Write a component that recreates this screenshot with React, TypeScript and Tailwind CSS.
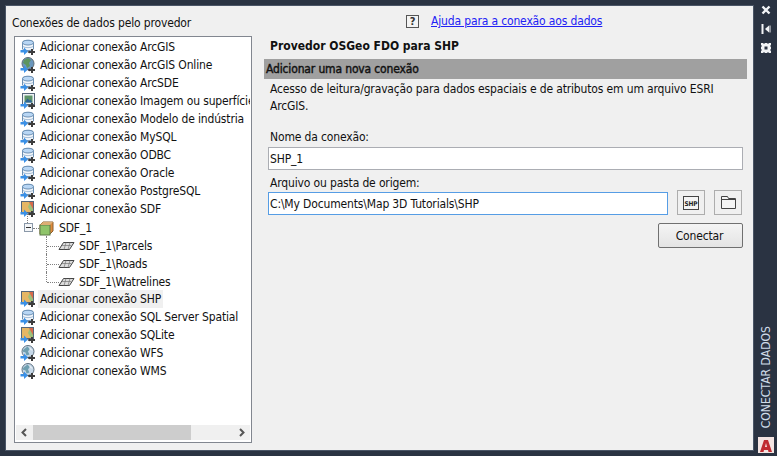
import React from "react";

type Kind = "db" | "globe" | "wms" | "image" | "map";

function Badge() {
  return (
    <>
      <path d="M0.5 11H4V8.5L8 12.5L4 16V13.5H0.5z" fill="#3a90e6" />
      <path d="M12 10v6M9 13h6" stroke="#3d3d3d" strokeWidth="2" />
      <path d="M7.5 13l2-1.5v3z" fill="#3d3d3d" />
    </>
  );
}

function AddIcon({ kind }: { kind: Kind }) {
  return (
    <svg width="16" height="16" viewBox="0 0 16 16" className="shrink-0">
      {kind === "db" && (
        <>
          <path d="M2.5 3.5C2.5 0.8 13.5 0.8 13.5 3.5V10C13.5 12 2.5 12 2.5 10z" fill="#f2f6fb" stroke="#6c90b4" />
          <ellipse cx="8" cy="3.6" rx="5.5" ry="2.4" fill="#b8d6f4" stroke="#6c90b4" />
          <path d="M3 7.5c1.500 1.500 8.500 1.500 10 0" fill="none" stroke="#a8c0d8" />
        </>
      )}
      {kind === "globe" && (
        <>
          <circle cx="8" cy="6.500" r="6" fill="#6b97bd" stroke="#5c6a74" />
          <path d="M4 3l4-2 3 2-2 3 1 3-3 2-1-3-3-2z" fill="#5d955f" />
        </>
      )}
      {kind === "wms" && (
        <>
          <circle cx="8" cy="6.500" r="6" fill="#c6d8e8" stroke="#5f7282" />
          <path d="M3.500 4.500l4-3 2.500 2-2 3 1.500 3-3 1-1-3-3-1z" fill="#6f9fb0" />
          <path d="M9 2.500l3 3" stroke="#fff" />
        </>
      )}
      {kind === "image" && (
        <>
          <rect x="2.500" y="0.500" width="12" height="11" fill="#eef2f6" stroke="#56677a" />
          <rect x="4.500" y="2.500" width="8" height="7" fill="#5c9468" />
          <path d="M4.500 9.500l3-4 2 2 1-1 2 3z" fill="#2e6596" />
        </>
      )}
      {kind === "map" && (
        <>
          <rect x="1.500" y="0.500" width="12" height="11" fill="#9cc07a" stroke="#56677a" />
          <path d="M2 1h8L8 6l3 5H2z" fill="#e6b765" />
          <path d="M9 1h4v7z" fill="#d8694a" />
        </>
      )}
      <Badge />
    </svg>
  );
}

function Row({ kind, text, active }: { kind: Kind; text: string; active?: boolean }) {
  return (
    <div className="flex h-[18px] items-center pl-[4px]">
      <AddIcon kind={kind} />
      <span className={`ml-[2px] whitespace-nowrap px-[2px] leading-[18px] ${active ? "bg-[#f0f0f0]" : ""}`}>{text}</span>
    </div>
  );
}

function LayerRow({ text, last }: { text: string; last?: boolean }) {
  return (
    <div className="relative flex h-[18px] items-center pl-[42px] pt-[2px]">
      <div className={`absolute left-[30px] top-0 border-l border-dotted border-[#808080] ${last ? "h-[10px]" : "h-[18px]"}`} />
      <div className="absolute left-[31px] top-[10px] w-[12px] border-t border-dotted border-[#808080]" />
      <svg width="17" height="10" viewBox="0 0 17 10" className="z-10 shrink-0">
        <path d="M5.500 1.500H16L11.500 8.500H1z" fill="#ddd" stroke="#444" />
        <path d="M4 4.500h9M8 1.500L6 8.500M12 1.500L10 8.500" stroke="#777" strokeWidth="0.7" />
      </svg>
      <span className="ml-[4px] whitespace-nowrap">{text}</span>
    </div>
  );
}

export default function App() {
  return (
    <div className="flex h-[456px] w-[777px] overflow-hidden bg-[#2a3342] text-[12px] tracking-[-0.15px] text-[#111] [font-family:'DejaVu_Sans','Liberation_Sans',sans-serif] [font-stretch:condensed]">
      <div className="ml-[5px] mt-[5px] flex h-[446px] w-[749px] shrink-0 border border-[#4a5566] bg-[#f0f0f0]">
        {/* left column */}
        <div className="flex w-[258px] shrink-0 flex-col pl-[6px] pt-[7px]">
          <div className="h-[23px] leading-[20px]">Conexões de dados pelo provedor</div>
          <div className="ml-[2px] flex h-[407px] w-[238px] flex-col border border-[#828790] bg-white py-[1px] pl-[1px] pr-[1px]">
            <div className="min-h-0 flex-1 overflow-hidden">
              <Row kind="db" text="Adicionar conexão ArcGIS" />
              <Row kind="globe" text="Adicionar conexão ArcGIS Online" />
              <Row kind="db" text="Adicionar conexão ArcSDE" />
              <Row kind="image" text="Adicionar conexão Imagem ou superfície" />
              <Row kind="db" text="Adicionar conexão Modelo de indústria" />
              <Row kind="db" text="Adicionar conexão MySQL" />
              <Row kind="db" text="Adicionar conexão ODBC" />
              <Row kind="db" text="Adicionar conexão Oracle" />
              <Row kind="db" text="Adicionar conexão PostgreSQL" />
              <Row kind="map" text="Adicionar conexão SDF" />
              <div className="relative flex h-[18px] items-center pl-[23px] pt-[2px]">
                <div className="absolute left-[11px] top-[-4px] h-[9px] border-l border-dotted border-[#808080]" />
                <div className="absolute left-[8px] top-[5px] flex h-[9px] w-[9px] items-center justify-center border border-[#8a98a8] bg-[#f4f6f8]">
                  <div className="h-px w-[5px] bg-[#333]" />
                </div>
                <div className="absolute left-[17px] top-[10px] w-[6px] border-t border-dotted border-[#808080]" />
                <svg width="15" height="15" viewBox="0 0 15 15" className="shrink-0">
                  <path d="M1 4l3-3h10v9l-3 3H1z" fill="#e08a3c" stroke="#8a6030" />
                  <rect x="1" y="4" width="10" height="10" fill="#8fc46a" stroke="#5c7a48" />
                  <path d="M1 4l3-3h10l-3 3z" fill="#dcae74" />
                </svg>
                <span className="ml-[5px]">SDF_1</span>
              </div>
              <LayerRow text="SDF_1\Parcels" />
              <LayerRow text="SDF_1\Roads" />
              <LayerRow text="SDF_1\Watrelines" last />
              <Row kind="map" text="Adicionar conexão SHP" active />
              <Row kind="db" text="Adicionar conexão SQL Server Spatial" />
              <Row kind="map" text="Adicionar conexão SQLite" />
              <Row kind="wms" text="Adicionar conexão WFS" />
              <Row kind="wms" text="Adicionar conexão WMS" />
            </div>
            <div className="mb-[1px] flex h-[15px] w-full shrink-0 items-center bg-[#f0f0f0]">
              <svg width="17" height="15" viewBox="0 0 17 15" className="shrink-0">
                <path d="M10 4L6.500 7.500 10 11" fill="none" stroke="#555" strokeWidth="2" />
              </svg>
              <div className="h-[15px] w-[158px] bg-[#cdcdcd]" />
              <div className="flex-1" />
              <svg width="17" height="15" viewBox="0 0 17 15" className="shrink-0">
                <path d="M7 4l3.500 3.500L7 11" fill="none" stroke="#555" strokeWidth="2" />
              </svg>
            </div>
          </div>
        </div>
        {/* right column */}
        <div className="flex min-w-0 flex-1 flex-col pr-[6px]">
          <div className="flex h-[29px] items-center pl-[142px] pt-[1px]">
            <div className="flex h-[13px] w-[13px] items-center justify-center border border-[#555] bg-[#f4f4f4] text-[11px] font-bold leading-none text-[#333]">?</div>
            <a className="ml-[12px] whitespace-nowrap text-[#2222f5] underline">Ajuda para a conexão aos dados</a>
          </div>
          <div className="h-[24px] pl-[6px] pt-[1px] font-bold leading-[20px] tracking-[0]">Provedor OSGeo FDO para SHP</div>
          <div className="h-[20px] bg-[#a0a0a0] pl-[2px] leading-[20px] [-webkit-text-stroke:0.4px_#111]">Adicionar uma nova conexão</div>
          <div className="mt-[2px] pl-[6px] pr-[20px] leading-[17px]">
            Acesso de leitura/gravação para dados espaciais e de atributos em um arquivo ESRI ArcGIS.
          </div>
          <div className="mt-[14px] pl-[6px] leading-[17px]">Nome da conexão:</div>
          <div className="ml-[4px] mt-[1px] flex h-[23px] w-[475px] items-center border border-[#abadb3] bg-white pl-[1px]">SHP_1</div>
          <div className="mt-[5px] pl-[6px] leading-[17px]">Arquivo ou pasta de origem:</div>
          <div className="ml-[4px] -mt-[2px] flex items-end">
            <div className="flex h-[23px] w-[400px] items-center border border-[#569de5] bg-white pl-[1px]">C:\My Documents\Map 3D Tutorials\SHP</div>
            <button className="ml-[9px] flex h-[25px] w-[28px] items-center justify-center border border-[#adadad] bg-[#f0f0f0]">
              <svg width="16" height="14" viewBox="0 0 16 14">
                <rect x="0.500" y="0.500" width="15" height="13" fill="#f4f4f4" stroke="#444" />
                <text x="8" y="10" textAnchor="middle" fontSize="6.500" fontWeight="700" fill="#222" fontFamily="DejaVu Sans, sans-serif">SHP</text>
              </svg>
            </button>
            <button className="ml-[9px] flex h-[25px] w-[28px] items-center justify-center border border-[#adadad] bg-[#f0f0f0]">
              <svg width="15" height="13" viewBox="0 0 15 13">
                <path d="M0.500 12.500V0.500H6.500L7.500 2.500H14.500V12.500ZM0.500 3.500H14.500" fill="#f4f4f4" stroke="#444" />
              </svg>
            </button>
          </div>
          <div className="flex justify-end pr-[4px] pt-[8px]">
            <button className="h-[25px] w-[85px] rounded-[2px] border border-[#707070] bg-gradient-to-b from-[#f4f4f4] to-[#e4e4e4] pr-[2px] text-[#111]">Conectar</button>
          </div>
        </div>
      </div>
      {/* right strip */}
      <div className="flex min-w-0 flex-1 flex-col items-center pt-[4px]">
        <svg width="12" height="12" viewBox="0 0 12 12">
          <path d="M2.500 2.500l7 7M9.500 2.500l-7 7" stroke="#f2f4f6" strokeWidth="2.400" />
        </svg>
        <svg width="12" height="12" viewBox="0 0 12 12" className="mt-[7px]">
          <path d="M2.500 1v10" stroke="#f2f4f6" strokeWidth="2" />
          <path d="M5 6l4-3.500v7z" fill="#f2f4f6" />
          <path d="M10 2.500v7" stroke="#f2f4f6" strokeWidth="1" />
        </svg>
        <svg width="12" height="12" viewBox="0 0 12 12" className="mt-[7px]">
          <path d="M1 1h2.500v1h1V1h3v1h1V1H11v2.500h-1v1h1v3h-1v1h1V11H8.500v-1h-1v1h-3v-1h-1v1H1V8.500h1v-1H1v-3h1v-1H1z" fill="#f2f4f6" />
          <rect x="4.500" y="4.500" width="3" height="3" fill="#2a3342" />
        </svg>
        <div className="flex-1" />
        <div className="mb-[9px] whitespace-nowrap text-[12px] leading-[16px] tracking-[0.05px] text-[#cfdbe8] [transform:rotate(180deg)] [writing-mode:vertical-rl]">CONECTAR DADOS</div>
        <div className="mb-[3px] flex h-[16px] w-[16px] items-center justify-center bg-[#f3e4e2]">
          <svg width="12" height="13" viewBox="0 0 12 13">
            <path d="M4 1h4l4 12H8.500L8 11H4l-.5 2H0zM5 8h2L6 4z" fill="#c02a30" fillRule="evenodd" />
          </svg>
        </div>
      </div>
    </div>
  );
}
